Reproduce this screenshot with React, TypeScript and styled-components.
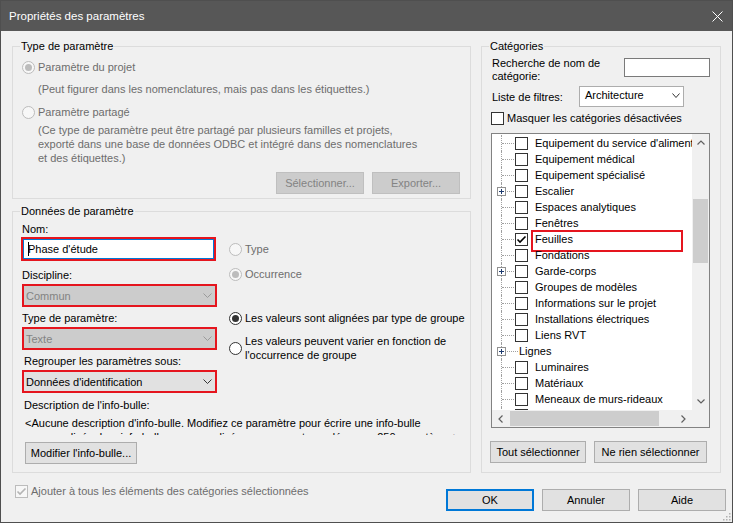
import styled, { createGlobalStyle } from "styled-components";

const GlobalStyle = createGlobalStyle`
  * {
    box-sizing: border-box;
  }
  body {
    margin: 0;
    background: #f0f0f0;
    font-family: "Liberation Sans", Arial, sans-serif;
    font-size: 11px;
    color: #000;
  }
`;

const RED = "#e5151e";
const GRAY_TEXT = "#6d6d6d";

const Window = styled.div`
  position: relative;
  width: 733px;
  height: 523px;
  border: 1px solid #4f4f4f;
  background: #f0f0f0;
  display: flex;
  flex-direction: column;
  overflow: hidden;
`;

const TitleBar = styled.div`
  flex: none;
  height: 30px;
  padding: 0 9px 0 8px;
  background: #575757;
  color: #fff;
  font-size: 11.5px;
  display: flex;
  align-items: center;
  justify-content: space-between;
`;

const Body = styled.div`
  flex: 1;
  padding: 15px 6px 0 11px;
  display: flex;
  flex-direction: column;
`;

const Columns = styled.div`
  display: flex;
  align-items: flex-start;
  gap: 10px;
`;

const LeftColumn = styled.div`
  width: 459px;
  display: flex;
  flex-direction: column;
  gap: 12px;
`;

const Group = styled.div<{ $height: number; $width?: number; $pt?: number }>`
  position: relative;
  width: ${(p) => (p.$width ? `${p.$width}px` : "auto")};
  height: ${(p) => p.$height}px;
  border: 1px solid #dcdcdc;
  padding: ${(p) => p.$pt ?? 0}px 10px 0 9px;
`;

const Legend = styled.span`
  position: absolute;
  top: -8px;
  left: 7px;
  padding: 0 1px;
  line-height: 15px;
  background: #f0f0f0;
`;

const Option = styled.div<{ $mt?: number; $disabled?: boolean; $lh?: number }>`
  margin-top: ${(p) => p.$mt ?? 0}px;
  display: flex;
  align-items: center;
  gap: 3px;
  white-space: nowrap;
  line-height: ${(p) => p.$lh ?? 15}px;
  color: ${(p) => (p.$disabled ? GRAY_TEXT : "#000")};
`;

const Radio = styled.span<{ $checked?: boolean; $disabled?: boolean }>`
  flex: none;
  width: 13px;
  height: 13px;
  border-radius: 50%;
  border: 1px solid ${(p) => (p.$disabled ? "#bcbcbc" : "#333")};
  background: ${(p) => (p.$disabled ? "#f7f7f7" : "#fff")};
  display: flex;
  align-items: center;
  justify-content: center;
  &::after {
    content: "";
    display: ${(p) => (p.$checked ? "block" : "none")};
    width: 7px;
    height: 7px;
    border-radius: 50%;
    background: ${(p) => (p.$disabled ? "#bcbcbc" : "#333")};
  }
`;

const BoxCheck = styled.span<{ $disabled?: boolean }>`
  flex: none;
  width: 13px;
  height: 13px;
  border: 1px solid ${(p) => (p.$disabled ? "#bcbcbc" : "#333")};
  background: ${(p) => (p.$disabled ? "#f7f7f7" : "#fff")};
  display: flex;
  align-items: center;
  justify-content: center;
`;

function Checkbox({ checked, disabled }: { checked?: boolean; disabled?: boolean }) {
  return (
    <BoxCheck $disabled={disabled}>
      {checked && (
        <svg width="11" height="11" viewBox="0 0 11 11">
          <path
            d="M1.5 5.5 L4 8 L9.5 2.5"
            fill="none"
            stroke={disabled ? "#b4b4b4" : "#000"}
            strokeWidth="1.6"
          />
        </svg>
      )}
    </BoxCheck>
  );
}

const Note = styled.div<{ $mt?: number }>`
  margin: ${(p) => p.$mt ?? 0}px 0 0 16px;
  line-height: 14px;
  white-space: nowrap;
  color: ${GRAY_TEXT};
`;

const ButtonRow = styled.div<{ $mt?: number; $ml?: number; $end?: boolean }>`
  margin: ${(p) => p.$mt ?? 0}px 0 0 ${(p) => p.$ml ?? 0}px;
  display: flex;
  gap: 8px;
  justify-content: ${(p) => (p.$end ? "flex-end" : "flex-start")};
`;

const Button = styled.button<{ $w: number; $primary?: boolean; $mt?: number; $ml?: number }>`
  width: ${(p) => p.$w}px;
  height: 22px;
  margin: ${(p) => p.$mt ?? 0}px 0 0 ${(p) => p.$ml ?? 0}px;
  padding: 0;
  font: inherit;
  color: #000;
  white-space: nowrap;
  background: #e1e1e1;
  border: ${(p) => (p.$primary ? "2px solid #0078d7" : "1px solid #adadad")};
  &:disabled {
    background: #cccccc;
    border-color: #bfbfbf;
    color: #838383;
  }
`;

const DataGrid = styled.div`
  display: grid;
  grid-template-columns: 207px 1fr;
`;

const FieldColumn = styled.div`
  display: flex;
  flex-direction: column;
  align-items: flex-start;
`;

const OptionColumn = styled.div`
  display: flex;
  flex-direction: column;
`;

const FieldLabel = styled.div<{ $mt?: number; $indent?: number }>`
  margin: ${(p) => p.$mt ?? 0}px 0 0 ${(p) => p.$indent ?? 0}px;
  line-height: 15px;
  white-space: nowrap;
`;

const NameBox = styled.div`
  width: 195px;
  height: 24px;
  margin-left: -1px;
  border: 2px solid ${RED};
`;

const NameInput = styled.div`
  height: 20px;
  border: 1px solid #0078d7;
  background: #fff;
  padding-left: 4px;
  display: flex;
  align-items: center;
`;

const Caret = styled.span`
  width: 1px;
  height: 14px;
  margin-right: -1px;
  background: #000;
`;

const Combo = styled.div<{ $disabled?: boolean; $mt?: number }>`
  width: 195px;
  height: 23px;
  margin-top: ${(p) => p.$mt ?? 0}px;
  border: 2px solid ${RED};
  padding: 0 3px 0 2px;
  background: ${(p) => (p.$disabled ? "#cccccc" : "#e1e1e1")};
  color: ${(p) => (p.$disabled ? "#838383" : "#000")};
  display: flex;
  align-items: center;
  justify-content: space-between;
`;

function Chevron({ color = "#333", w = 9 }: { color?: string; w?: number }) {
  return (
    <svg width={w} height="5" viewBox={`0 0 ${w} 5`}>
      <polyline
        points={`0.5,0.5 ${w / 2},4.5 ${w - 0.5},0.5`}
        fill="none"
        stroke={color}
        strokeWidth="1"
      />
    </svg>
  );
}

const TooltipText = styled.div`
  margin: 3px 0 0 3px;
  height: 19px;
  overflow: hidden;
  line-height: 14px;
  white-space: nowrap;
`;

/* Catégories */

const SearchRow = styled.div`
  display: flex;
  justify-content: space-between;
  align-items: flex-start;
  padding-left: 1px;
`;

const TwoLineLabel = styled.div`
  line-height: 13px;
`;

const TextBox = styled.div<{ $w: number; $h: number }>`
  width: ${(p) => p.$w}px;
  height: ${(p) => p.$h}px;
  margin-top: 1px;
  background: #fff;
  border: 1px solid #7a7a7a;
`;

const FilterRow = styled.div`
  margin-top: 3px;
  padding-left: 1px;
  display: flex;
  align-items: center;
`;

const FilterLabel = styled.span`
  width: 87px;
  line-height: 15px;
  padding-top: 2px;
`;

const FilterSelect = styled.div`
  width: 105px;
  height: 21px;
  border: 1px solid #adadad;
  background: #fff;
  padding: 0 3px 3px 5px;
  display: flex;
  align-items: center;
  justify-content: space-between;
`;

const CheckRow = styled.div<{ $mt?: number; $disabled?: boolean }>`
  margin-top: ${(p) => p.$mt ?? 0}px;
  display: flex;
  align-items: center;
  gap: 3px;
  line-height: 15px;
  white-space: nowrap;
  color: ${(p) => (p.$disabled ? GRAY_TEXT : "#000")};
`;

const Tree = styled.div`
  margin-top: 7px;
  width: 219px;
  height: 295px;
  border: 1px solid #828282;
  background: #fff;
  display: grid;
  grid-template-columns: 200px 17px;
  grid-template-rows: 276px 17px;
`;

const TreeList = styled.div`
  overflow: hidden;
  padding-top: 1px;
`;

const TreeRow = styled.div`
  height: 16px;
  display: flex;
  align-items: center;
  white-space: nowrap;
`;

const Gutter = styled.span<{ $w: number }>`
  position: relative;
  flex: none;
  align-self: stretch;
  width: ${(p) => p.$w}px;
  &::before {
    content: "";
    position: absolute;
    left: 9px;
    top: 0;
    bottom: 0;
    border-left: 1px dotted #a0a0a0;
  }
  &::after {
    content: "";
    position: absolute;
    left: 10px;
    right: 1px;
    top: 8px;
    border-top: 1px dotted #a0a0a0;
  }
`;

const Expander = styled.svg`
  position: absolute;
  left: 5px;
  top: 4px;
  z-index: 1;
`;

const TreeLabel = styled.span<{ $marked?: boolean; $gap: number }>`
  position: relative;
  margin-left: ${(p) => p.$gap}px;
  line-height: 16px;
  padding-bottom: 1px;
  &::after {
    content: "";
    display: ${(p) => (p.$marked ? "block" : "none")};
    position: absolute;
    left: -4px;
    top: -1px;
    width: 148px;
    height: 18px;
    border: 2px solid ${RED};
  }
`;

const VScroll = styled.div`
  background: #f0f0f0;
  display: flex;
  flex-direction: column;
  align-items: center;
`;

const HScroll = styled.div`
  background: #f0f0f0;
  display: flex;
  align-items: center;
`;

const ArrowCell = styled.div`
  flex: none;
  width: 17px;
  height: 17px;
  display: flex;
  align-items: center;
  justify-content: center;
`;

const VTrack = styled.div`
  flex: 1;
  width: 100%;
  padding: 48px 1px 0;
`;

const VThumb = styled.div`
  height: 64px;
  background: #cdcdcd;
`;

const HTrack = styled.div`
  flex: 1;
  height: 100%;
  padding: 1px 0 1px 1px;
`;

const HThumb = styled.div`
  width: 149px;
  height: 100%;
  background: #cdcdcd;
`;

const Corner = styled.div`
  background: #f0f0f0;
`;

const Footer = styled.div`
  display: flex;
  justify-content: space-between;
  align-items: flex-start;
  padding: 11px 0 0 3px;
`;

const Grip = styled.svg`
  position: absolute;
  right: 1px;
  bottom: 1px;
`;

type Category = {
  name: string;
  expandable?: boolean;
  checked?: boolean;
  marked?: boolean;
  noCheck?: boolean;
};

const categories: Category[] = [
  { name: "Equipement du service d'alimentation" },
  { name: "Equipement médical" },
  { name: "Equipement spécialisé" },
  { name: "Escalier", expandable: true },
  { name: "Espaces analytiques" },
  { name: "Fenêtres" },
  { name: "Feuilles", checked: true, marked: true },
  { name: "Fondations" },
  { name: "Garde-corps", expandable: true },
  { name: "Groupes de modèles" },
  { name: "Informations sur le projet" },
  { name: "Installations électriques" },
  { name: "Liens RVT" },
  { name: "Lignes", expandable: true, noCheck: true },
  { name: "Luminaires" },
  { name: "Matériaux" },
  { name: "Meneaux de murs-rideaux" },
  { name: "Meubles de rangement" },
];

function Arrow({ dir }: { dir: "up" | "down" | "left" | "right" }) {
  const pts = {
    up: "0.5,4.5 4,1 7.5,4.5",
    down: "0.5,0.5 4,4 7.5,0.5",
    left: "4.5,0.5 1,4 4.5,7.5",
    right: "0.5,0.5 4,4 0.5,7.5",
  }[dir];
  const vertical = dir === "up" || dir === "down";
  return (
    <svg width={vertical ? 8 : 5} height={vertical ? 5 : 8}>
      <polyline points={pts} fill="none" stroke="#606060" strokeWidth="1.2" />
    </svg>
  );
}

export default function App() {
  return (
    <>
      <GlobalStyle />
      <Window>
        <TitleBar>
          <span>Propriétés des paramètres</span>
          <svg width="11" height="11" viewBox="0 0 11 11">
            <path d="M0.5 0.5 L10.5 10.5 M10.5 0.5 L0.5 10.5" stroke="#fff" strokeWidth="1" />
          </svg>
        </TitleBar>
        <Body>
          <Columns>
            <LeftColumn>
              <Group $height={153}>
                <Legend>Type de paramètre</Legend>
                <Option $mt={13} $disabled>
                  <Radio $checked $disabled />
                  Paramètre du projet
                </Option>
                <Note $mt={7}>
                  (Peut figurer dans les nomenclatures, mais pas dans les étiquettes.)
                </Note>
                <Option $mt={9} $disabled>
                  <Radio $disabled />
                  Paramètre partagé
                </Option>
                <Note $mt={3}>
                  (Ce type de paramètre peut être partagé par plusieurs familles et projets,
                  <br />
                  exporté dans une base de données ODBC et intégré dans des nomenclatures
                  <br />
                  et des étiquettes.)
                </Note>
                <ButtonRow $mt={7} $end>
                  <Button $w={88} disabled>
                    Sélectionner...
                  </Button>
                  <Button $w={88} disabled>
                    Exporter...
                  </Button>
                </ButtonRow>
              </Group>

              <Group $height={262} $pt={10}>
                <Legend>Données de paramètre</Legend>
                <DataGrid>
                  <FieldColumn>
                    <FieldLabel>Nom:</FieldLabel>
                    <NameBox>
                      <NameInput>
                        <Caret />
                        Phase d'étude
                      </NameInput>
                    </NameBox>
                    <FieldLabel $mt={7}>Discipline:</FieldLabel>
                    <Combo $disabled $mt={1}>
                      Commun
                      <Chevron color="#9a9a9a" />
                    </Combo>
                    <FieldLabel $mt={4}>Type de paramètre:</FieldLabel>
                    <Combo $disabled $mt={1}>
                      Texte
                      <Chevron color="#9a9a9a" />
                    </Combo>
                    <FieldLabel $mt={4} $indent={2}>
                      Regrouper les paramètres sous:
                    </FieldLabel>
                    <Combo $mt={1}>
                      Données d'identification
                      <Chevron color="#333" />
                    </Combo>
                  </FieldColumn>
                  <OptionColumn>
                    <Option $mt={20} $disabled>
                      <Radio $disabled />
                      Type
                    </Option>
                    <Option $mt={10} $disabled>
                      <Radio $checked $disabled />
                      Occurrence
                    </Option>
                    <Option $mt={29}>
                      <Radio $checked />
                      Les valeurs sont alignées par type de groupe
                    </Option>
                    <Option $mt={9} $lh={13.5}>
                      <Radio />
                      <span>
                        Les valeurs peuvent varier en fonction de
                        <br />
                        l'occurrence de groupe
                      </span>
                    </Option>
                  </OptionColumn>
                </DataGrid>
                <FieldLabel $mt={5} $indent={2}>
                  Description de l'info-bulle:
                </FieldLabel>
                <TooltipText>
                  &lt;Aucune description d'info-bulle. Modifiez ce paramètre pour écrire une info-bulle
                  <br />
                  personnalisée. Les info-bulles personnalisées ne peuvent pas dépasser 250 caractères.&gt;
                </TooltipText>
                <Button $w={112} $mt={7} $ml={3}>
                  Modifier l'info-bulle...
                </Button>
              </Group>
            </LeftColumn>

            <Group $height={427} $width={240} $pt={10}>
              <Legend>Catégories</Legend>
              <SearchRow>
                <TwoLineLabel>
                  Recherche de nom de
                  <br />
                  catégorie:
                </TwoLineLabel>
                <TextBox $w={86} $h={19} />
              </SearchRow>
              <FilterRow>
                <FilterLabel>Liste de filtres:</FilterLabel>
                <FilterSelect>
                  Architecture
                  <Chevron color="#333" w={8} />
                </FilterSelect>
              </FilterRow>
              <CheckRow $mt={4}>
                <Checkbox />
                Masquer les catégories désactivées
              </CheckRow>
              <Tree>
                <TreeList>
                  {categories.map((c) => (
                    <TreeRow key={c.name}>
                      <Gutter $w={c.noCheck ? 27 : 23}>
                        {c.expandable && (
                          <Expander width="9" height="9" viewBox="0 0 9 9">
                            <rect x="0.5" y="0.5" width="8" height="8" fill="#fff" stroke="#919191" />
                            <path d="M2 4.5 H7 M4.5 2 V7" stroke="#1c3a6e" strokeWidth="1" />
                          </Expander>
                        )}
                      </Gutter>
                      {!c.noCheck && <Checkbox checked={c.checked} />}
                      <TreeLabel $marked={c.marked} $gap={c.noCheck ? 0 : 7}>
                        {c.name}
                      </TreeLabel>
                    </TreeRow>
                  ))}
                </TreeList>
                <VScroll>
                  <ArrowCell>
                    <Arrow dir="up" />
                  </ArrowCell>
                  <VTrack>
                    <VThumb />
                  </VTrack>
                  <ArrowCell>
                    <Arrow dir="down" />
                  </ArrowCell>
                </VScroll>
                <HScroll>
                  <ArrowCell>
                    <Arrow dir="left" />
                  </ArrowCell>
                  <HTrack>
                    <HThumb />
                  </HTrack>
                  <ArrowCell>
                    <Arrow dir="right" />
                  </ArrowCell>
                </HScroll>
                <Corner />
              </Tree>
              <ButtonRow $mt={13} $ml={-1}>
                <Button $w={96}>Tout sélectionner</Button>
                <Button $w={113}>Ne rien sélectionner</Button>
              </ButtonRow>
            </Group>
          </Columns>

          <Footer>
            <CheckRow $disabled>
              <Checkbox checked disabled />
              Ajouter à tous les éléments des catégories sélectionnées
            </CheckRow>
            <ButtonRow $mt={5}>
              <Button $w={88} $primary>
                OK
              </Button>
              <Button $w={88}>Annuler</Button>
              <Button $w={88}>Aide</Button>
            </ButtonRow>
          </Footer>
        </Body>
        <Grip width="10" height="10" viewBox="0 0 10 10">
          {[
            [8, 2],
            [8, 5],
            [5, 5],
            [8, 8],
            [5, 8],
            [2, 8],
          ].map(([x, y]) => (
            <rect key={`${x}-${y}`} x={x} y={y} width="1.5" height="1.5" fill="#b0b0b0" />
          ))}
        </Grip>
      </Window>
    </>
  );
}
